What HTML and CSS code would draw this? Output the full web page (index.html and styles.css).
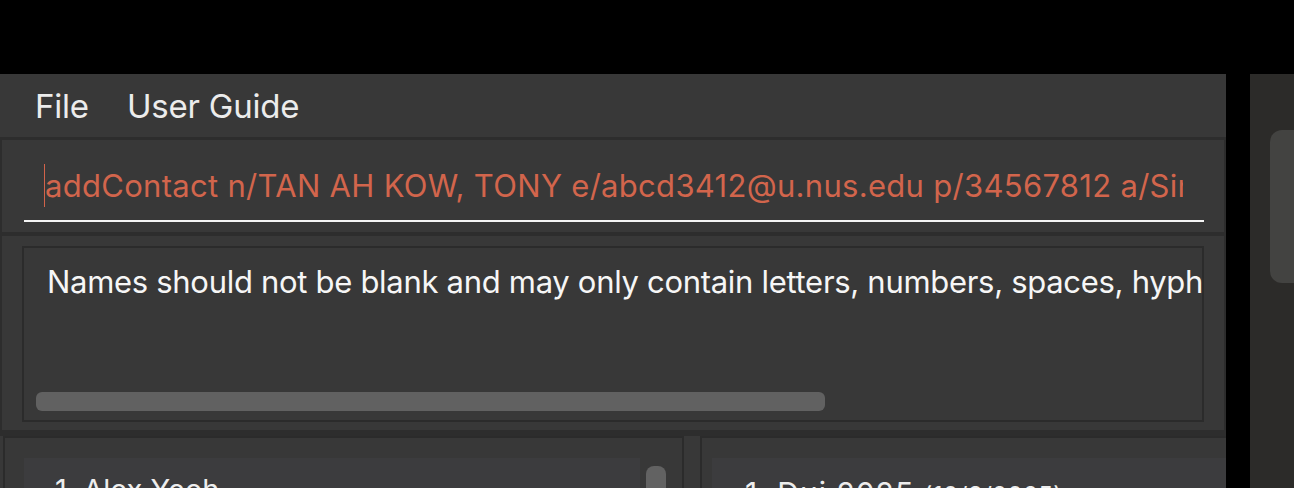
FILE: index.html
```html
<!DOCTYPE html>
<html>
<head>
<meta charset="utf-8">
<link rel="stylesheet" href="styles.css">
</head>
<body>
<div class="screen">
  <div class="topbar"></div>
  <div class="desk">
    <div class="app">
      <div class="menubar">
        <span class="menu-item">File</span>
        <span class="menu-item">User Guide</span>
      </div>
      <div class="panel command">
        <div class="field">
          <span class="caret"></span>
          <span class="cmd">addContact n/TAN AH KOW, TONY e/abcd3412@u.nus.edu p/34567812 a/Singapore Street 12</span>
        </div>
      </div>
      <div class="panel result">
        <div class="resultbox">
          <div class="msg">Names should not be blank and may only contain letters, numbers, spaces, hyphens and apostrophes</div>
          <div class="hscroll"></div>
        </div>
      </div>
      <div class="lists">
        <div class="listpanel people">
          <div class="cell person">1. Alex Yeoh</div>
          <div class="vscroll"></div>
        </div>
        <div class="listpanel events">
          <div class="cell event">1. Dui 2025 <span class="date">(10/3/2025)</span></div>
        </div>
      </div>
    </div>
    <div class="side">
      <div class="sidecard"></div>
    </div>
  </div>
</div>
</body>
</html>
```

FILE: styles.css
```css
* { box-sizing: border-box; }
html, body {
  margin: 0;
  padding: 0;
  background: #000;
  width: 1294px;
  height: 488px;
  overflow: hidden;
  font-family: "Inter", "Noto Sans", sans-serif;
}
.screen {
  display: flex;
  flex-direction: column;
  height: 488px;
}
.topbar {
  height: 74px;
  flex: none;
  background: #000;
}
.desk {
  display: flex;
  gap: 24px;
  flex: 1;
  min-height: 0;
}
.app {
  width: 1226px;
  flex: none;
  background: #2d2d2d;
  display: flex;
  flex-direction: column;
  overflow: hidden;
}
.menubar {
  height: 63px;
  flex: none;
  background: #383838;
  display: flex;
  align-items: center;
  gap: 38px;
  padding-left: 35px;
  padding-top: 1px;
  color: #ececec;
  font-size: 33px;
  letter-spacing: -0.2px;
}
.panel {
  background: #383838;
  margin: 0 2px;
  flex: none;
}
.command {
  margin-top: 3px;
  height: 92px;
  padding: 10px 20px 10px 22px;
}
.field {
  display: flex;
  align-items: flex-start;
  height: 72px;
  padding: 14px 21px 0 20px;
  border-bottom: 2px solid #f4f4f4;
  overflow: hidden;
  white-space: nowrap;
}
.caret {
  width: 1px;
  height: 43px;
  background: #d2634a;
  flex: none;
}
.cmd {
  color: #d2654c;
  font-size: 31px;
  line-height: 43px;
  letter-spacing: 0.3px;
  overflow: hidden;
}
.result {
  margin-top: 4px;
  height: 194px;
  padding: 10px 20px 8px 20px;
}
.resultbox {
  height: 176px;
  border: 2px solid #2b2b2b;
  display: flex;
  flex-direction: column;
  padding: 12px 0 9px 12px;
  overflow: hidden;
}
.msg {
  color: #f6f6f6;
  font-size: 31px;
  white-space: nowrap;
  overflow: hidden;
  padding-left: 11px;
  line-height: 44px;
  letter-spacing: -0.3px;
}
.hscroll {
  margin-top: auto;
  width: 789px;
  height: 19px;
  border-radius: 6px;
  background: #616161;
}
.lists {
  margin-top: 6px;
  display: flex;
  gap: 16px;
  padding-left: 3px;
  flex: 1;
  background: #383838;
}
.listpanel {
  border: 2px solid #2b2b2b;
  border-bottom: none;
  background: #383838;
  position: relative;
  padding-top: 20px;
}
.people {
  width: 681px;
  flex: none;
  padding-left: 19px;
}
.events {
  flex: 1;
  border-right: none;
  padding-left: 10px;
}
.cell {
  background: #3c3c3e;
  height: 80px;
  color: #ededed;
  white-space: nowrap;
}
.person {
  width: 616px;
  padding-left: 31px;
  padding-top: 14px;
  font-size: 29px;
}
.event {
  padding-left: 33px;
  padding-top: 17px;
  font-size: 30px;
  letter-spacing: 1px;
}
.date {
  font-size: 24px;
  letter-spacing: 0.5px;
}
.vscroll {
  position: absolute;
  left: 641px;
  top: 28px;
  width: 20px;
  height: 80px;
  border-radius: 8px;
  background: #626262;
}
.side {
  flex: 1;
  background: #2c2b29;
  padding: 56px 0 0 20px;
}
.sidecard {
  height: 153px;
  background: #434341;
  border-radius: 12px 0 0 12px;
}
```
